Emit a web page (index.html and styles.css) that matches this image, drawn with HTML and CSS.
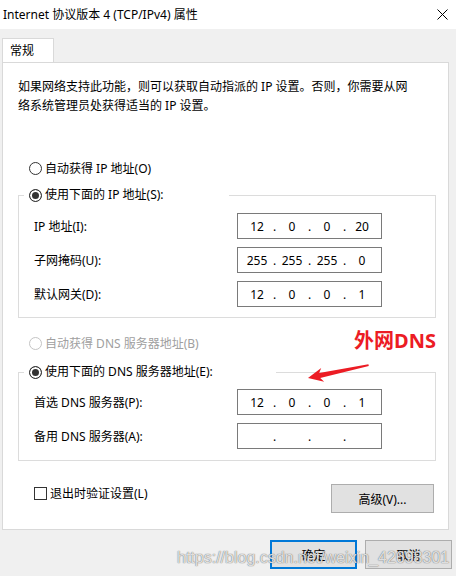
FILE: index.html
```html
<!DOCTYPE html>
<html lang="zh-CN">
<head>
    <meta charset="UTF-8">
    <meta name="viewport" content="width=device-width, initial-scale=1.0">
    <title>Internet 协议版本 4 (TCP/IPv4) 属性</title>
    <link rel="stylesheet" href="styles.css">
</head>
<body>
    <!-- Title Bar -->
    <div class="titlebar">
        <span class="title">Internet 协议版本 4 (TCP/IPv4) 属性</span>
        <svg class="close" width="11" height="11" viewBox="0 0 11 11">
            <path d="M0.5 0.5L10.5 10.5M10.5 0.5L0.5 10.5" stroke="#000" stroke-width="1" fill="none"/>
        </svg>
    </div>

    <!-- Tabs -->
    <div class="tabs">
        <div class="tab">常规</div>
    </div>

    <div class="panel">
        <p class="desc">如果网络支持此功能，则可以获取自动指派的 IP 设置。否则，你需要从网<br>络系统管理员处获得适当的 IP 设置。</p>

        <div class="radio-row first"><span class="radio"></span>自动获得 IP 地址(O)</div>

        <fieldset class="group ip-group">
            <legend class="ip-legend"><span class="radio checked"></span>使用下面的 IP 地址(S):</legend>
            <div class="fields">
                <span>IP 地址(I):</span>
                <div class="ipbox"><span>12</span><i>.</i><span>0</span><i>.</i><span>0</span><i>.</i><span>20</span></div>
                <span>子网掩码(U):</span>
                <div class="ipbox"><span>255</span><i>.</i><span>255</span><i>.</i><span>255</span><i>.</i><span>0</span></div>
                <span>默认网关(D):</span>
                <div class="ipbox"><span>12</span><i>.</i><span>0</span><i>.</i><span>0</span><i>.</i><span>1</span></div>
            </div>
        </fieldset>

        <div class="radio-row disabled"><span class="radio"></span>自动获得 DNS 服务器地址(B)</div>

        <fieldset class="group dns-group">
            <legend class="dns-legend"><span class="radio checked"></span>使用下面的 DNS 服务器地址(E):</legend>
            <div class="fields">
                <span>首选 DNS 服务器(P):</span>
                <div class="ipbox"><span>12</span><i>.</i><span>0</span><i>.</i><span>0</span><i>.</i><span>1</span></div>
                <span>备用 DNS 服务器(A):</span>
                <div class="ipbox"><span></span><i>.</i><span></span><i>.</i><span></span><i>.</i><span></span></div>
            </div>
        </fieldset>

        <div class="footer">
            <label class="check"><span class="box"></span>退出时验证设置(L)</label>
            <button class="btn advanced">高级(V)...</button>
        </div>

        <!-- Red annotation -->
        <div class="note">外网DNS</div>
        <svg class="arrow" width="75" height="35" viewBox="0 0 75 35">
            <polygon points="8,23 21.2,13.1 19.2,18.1 68.4,9.3 68.8,10.9 20.2,22.9 24.2,26.7" fill="#ec1c24"/>
        </svg>
    </div>

    <!-- Dialog Buttons -->
    <div class="actions">
        <button class="btn ok">确定</button>
        <button class="btn">取消</button>
    </div>

    <div class="watermark">https://blog.csdn.net/weixin_42698301</div>
</body>
</html>
```

FILE: styles.css
```css
body {
    margin: 0;
    width: 456px;
    height: 576px;
    overflow: hidden;
    background-color: #f0f0f0;
    font-family: "Noto Sans", "Noto Sans CJK SC", sans-serif;
    font-size: 12px;
    color: #000;
}

/* Title Bar */
.titlebar {
    height: 29px;
    background-color: #ffffff;
    display: flex;
    align-items: center;
    justify-content: space-between;
    padding: 0 8px 0 3px;
}

.title {
    line-height: 16px;
}

/* Tabs */
.tabs {
    display: flex;
    padding: 9px 0 0 2px;
}

.tab {
    position: relative;
    width: 52px;
    height: 25px;
    box-sizing: border-box;
    margin-bottom: -1px;
    padding-left: 7px;
    line-height: 23px;
    background-color: #ffffff;
    border: 1px solid #d9d9d9;
    border-bottom: none;
}

/* Main Panel */
.panel {
    position: relative;
    margin-left: 2px;
    width: 447px;
    height: 468px;
    box-sizing: border-box;
    background-color: #ffffff;
    border: 1px solid #d9d9d9;
    padding-top: 14px;
}

.desc {
    margin: 0;
    padding-left: 15px;
    line-height: 19px;
}

/* Radio Buttons */
.radio-row {
    display: flex;
    align-items: center;
    height: 20px;
    padding-left: 26px;
}

.radio-row.first {
    margin-top: 43px;
}

.radio-row.disabled {
    margin-top: 15px;
    color: #a0a0a0;
}

.radio {
    display: inline-block;
    width: 13px;
    height: 13px;
    box-sizing: border-box;
    border: 1px solid #333333;
    border-radius: 50%;
    background-color: #ffffff;
    margin-right: 3px;
}

.radio.checked {
    background-color: #333333;
    box-shadow: inset 0 0 0 2px #ffffff;
}

.disabled .radio {
    border-color: #c4c4c4;
}

/* Group Boxes */
.group {
    margin: 7px 0 0 15px;
    width: 418px;
    box-sizing: border-box;
    border: 1px solid #dcdcdc;
    padding: 8px 0 10px 15px;
    min-width: 0;
}

.dns-group {
    margin-top: 9px;
    padding-top: 7px;
    padding-bottom: 11px;
}

.group legend {
    display: flex;
    align-items: center;
    box-sizing: border-box;
    height: 20px;
    margin-left: -10px;
    padding: 0 0 0 5px;
    line-height: 20px;
}

.ip-legend {
    width: 205px;
}

.dns-legend {
    width: 252px;
}

.fields {
    display: grid;
    grid-template-columns: 203px 145px;
    grid-auto-rows: 26px;
    row-gap: 8px;
    align-items: center;
}

/* IP Address Boxes */
.ipbox {
    display: flex;
    align-items: center;
    width: 145px;
    height: 26px;
    box-sizing: border-box;
    border: 1px solid #7a7a7a;
    padding-left: 5px;
}

.ipbox span {
    width: 28px;
    text-align: center;
}

.ipbox i {
    width: 7px;
    font-style: normal;
    text-align: center;
}

/* Footer Row */
.footer {
    display: flex;
    justify-content: space-between;
    align-items: flex-start;
    margin-top: 22px;
    padding: 0 14px 0 31px;
}

.check {
    display: flex;
    align-items: center;
    height: 20px;
}

.box {
    width: 13px;
    height: 13px;
    box-sizing: border-box;
    border: 1px solid #333333;
    margin-right: 3px;
}

/* Buttons */
.btn {
    width: 87px;
    height: 29px;
    box-sizing: border-box;
    background-color: #e1e1e1;
    border: 1px solid #adadad;
    font-family: inherit;
    font-size: 12px;
    color: #000;
    padding: 0;
}

.advanced {
    width: 103px;
    margin-top: 1px;
}

.btn.ok {
    border: 2px solid #0078d7;
}

.actions {
    display: flex;
    justify-content: flex-end;
    gap: 8px;
    margin-top: 10px;
    padding-right: 4px;
}

/* Annotation */
.note {
    position: absolute;
    left: 351px;
    top: 268px;
    line-height: 20px;
    font-size: 20px;
    font-weight: bold;
    color: #ec1c24;
}

.arrow {
    position: absolute;
    left: 297px;
    top: 292px;
}

/* Watermark over the buttons */
.watermark {
    position: absolute;
    left: 177px;
    top: 549px;
    font-family: "Liberation Sans", sans-serif;
    font-size: 16px;
    line-height: 18px;
    color: rgba(255, 255, 255, 0.8);
    text-shadow: 0 0 1px rgba(80, 80, 80, 0.8), 0 0 1px rgba(80, 80, 80, 0.5);
}
```
